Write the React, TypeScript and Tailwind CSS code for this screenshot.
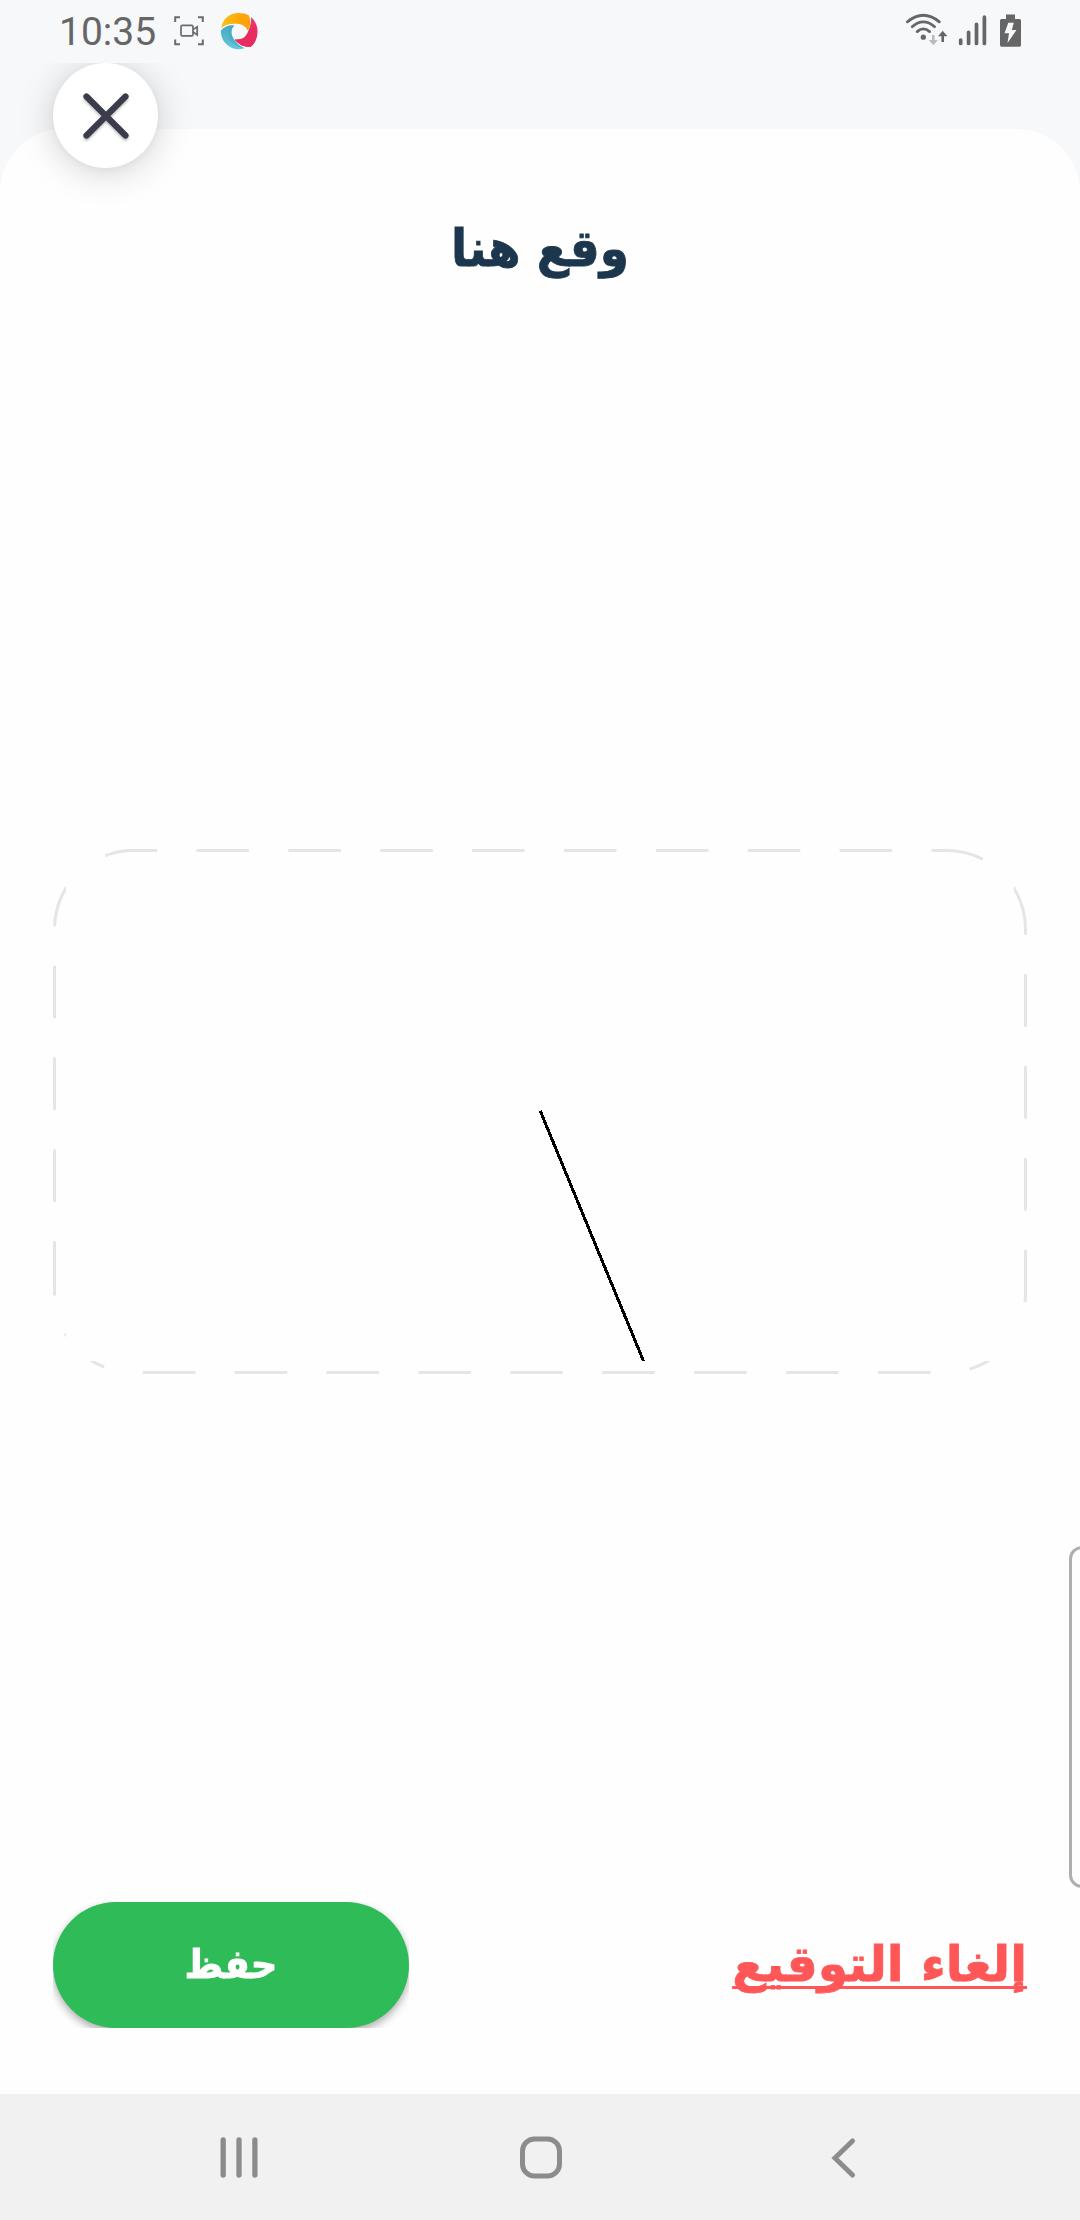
function CaptureIcon() {
  return (
    <svg className="h-[32px] w-[32px]" viewBox="173 14 32 32" fill="none" stroke="#6b6b6b" strokeWidth="2">
      <path d="M175.2 22V17.2H180M198 17.2H202.8V22M202.8 39.5V44.3H198M180 44.3H175.2V39.5" />
      <rect x="181" y="25.4" width="12" height="10.4" rx="1.4" strokeWidth="1.7" />
      <path d="M193 29.6L197.2 26.8V34.8L193 32" strokeWidth="1.7" />
    </svg>
  );
}

function SwirlLogo() {
  return (
    <svg className="h-[38px] w-[38px]" viewBox="0 0 38 38">
      <defs>
        <linearGradient id="sun" x1="0" x2="1">
          <stop offset="0" stopColor="#fdc113" />
          <stop offset="1" stopColor="#fd9b07" />
        </linearGradient>
        <linearGradient id="rose" x1="0" y1="0" x2="0" y2="1">
          <stop offset="0" stopColor="#f4386f" />
          <stop offset="1" stopColor="#dc1f4e" />
        </linearGradient>
        <linearGradient id="sea" x1="0" y1="0" x2="0" y2="1">
          <stop offset="0" stopColor="#42aac2" />
          <stop offset="1" stopColor="#68c5dc" />
        </linearGradient>
      </defs>
      <path d="M1.4 16C2.3 6.5 10 1 18.5 1C22.500 1 26 1.900 28.500 3.200C30.800 7.500 30.500 13 27.800 18.500C26 14.500 22 12 17 11.800C10.500 11.300 5.300 12.500 1.400 16Z" fill="url(#sun)" />
      <path d="M16 6C21 7.500 25.500 11 27.800 18.500C30.500 13 30.800 7.500 28.500 3.200C24 2.800 19 4 16 6Z" fill="#fea30a" />
      <path d="M31 5C35 8.500 37.800 14 37.500 20C37.300 27 34.500 32 30.500 34.800C24 35.300 18.500 32.500 14.800 27.500C20 28.500 25 26 27.200 21.500C30 16 31.500 10.500 31 5Z" fill="url(#rose)" />
      <path d="M36.500 15C33 22 26 28 14.800 27.500C18.500 32.500 24 35.300 30.500 34.800C36 30.500 38 23 36.500 15Z" fill="#e92c60" />
      <path d="M.8 19C3.500 15 8.500 13 14.500 13.300C11 16.500 10.500 21.500 13.200 26C15.800 30.500 19.500 34 24.500 36.300C18.500 38.300 12 37.200 7.300 33C3 29.500 1 24.500 .8 19Z" fill="url(#sea)" />
      <path d="M14.500 13.300C9 17.500 7 23 9.300 27C11.500 31.500 16 34 24.500 36.300C19.500 34 15.800 30.500 13.200 26C10.500 21.500 11 16.500 14.500 13.300Z" fill="#3da5be" opacity=".45" />
    </svg>
  );
}

function WifiIcon() {
  return (
    <svg className="h-[34px] w-[44px]" viewBox="904 12 44 34" fill="none" strokeLinecap="round">
      <g stroke="#666" strokeWidth="2.8">
        <path d="M907.400 21.800Q923.300 8.700 939.300 21.800" />
        <path d="M912.200 26.700Q923.300 17 934.600 26.700" />
        <path d="M917.200 31.600Q923.300 26.200 929.600 31.600" />
      </g>
      <circle cx="923.300" cy="37.200" r="2.600" fill="#666" />
      <path d="M933.300 35V42" stroke="#bbb" strokeWidth="2.600" strokeLinecap="butt" />
      <path d="M928.800 40H937.800L933.300 45.200Z" fill="#bbb" />
      <path d="M942.700 42V34" stroke="#666" strokeWidth="2.600" strokeLinecap="butt" />
      <path d="M938 36.300L942.700 30.800L947.400 36.300Z" fill="#666" />
    </svg>
  );
}

function SignalIcon() {
  return (
    <svg className="h-[32px] w-[30px]" viewBox="958 14 30 32" stroke="#666" strokeWidth="3.700" strokeLinecap="round">
      <path d="M960.700 40V43.500M968.600 32.300V43.500M976.500 24.300V43.500M984.400 17.200V43.500" />
    </svg>
  );
}

function BatteryIcon() {
  return (
    <svg className="h-[34px] w-[22px]" viewBox="1000 14 22 34">
      <path d="M1006 14.500H1015V19H1019.500Q1021 19 1021 20.500V45Q1021 46.700 1019.500 46.700H1001.500Q1000 46.700 1000 45V20.500Q1000 19 1001.500 19H1006Z" fill="#666" />
      <path d="M1008.300 22.700H1013.800L1011.800 30H1016.500L1007.500 43L1009 33.200H1004.500Z" fill="#f7f8fa" />
    </svg>
  );
}

function SignaturePad() {
  return (
    <div className="ml-[53px] h-[525px] w-[974px]">
      <svg className="h-[525px] w-[974px]" viewBox="53 849 974 525" fill="none">
        <path
          d="M54.5 1293.75V929.25A78.75 78.75 0 0 1 133.25 850.5H946.75A78.75 78.75 0 0 1 1025.5 929.25V1293.75A78.75 78.75 0 0 1 946.75 1372.5H133.25A78.75 78.75 0 0 1 54.5 1293.75"
          stroke="#e5e5e5"
          strokeWidth="3"
          strokeDasharray="52.5 39.375"
        />
        <rect x="66" y="862" width="948" height="499" fill="#fefefe" />
        <path d="M540.300 1111L643.500 1361" stroke="#000" strokeWidth="3" shapeRendering="crispEdges" />
      </svg>
    </div>
  );
}

export default function App() {
  return (
    <div className="relative flex h-[2220px] w-[1080px] flex-col overflow-hidden bg-[#f7f8fa]">
      <header className="flex h-[63px] shrink-0 items-start" dir="ltr">
        <span className="ml-[59px] mt-[9px] w-[114px] font-['Roboto'] text-[39px] leading-[46px] text-[#666]">10:35</span>
        <div className="mt-[14px]"><CaptureIcon /></div>
        <div className="ml-[15px] mt-[12px]"><SwirlLogo /></div>
        <div className="ml-auto mr-[58px] mt-[12px] flex items-start">
          <WifiIcon />
          <div className="ml-[10px] mt-[2px]"><SignalIcon /></div>
          <div className="ml-[12px] mt-[2px]"><BatteryIcon /></div>
        </div>
      </header>

      <main className="mt-[66px] flex h-[1965px] shrink-0 flex-col rounded-t-[63px] bg-[#fefefe]">
        <h1 className="mt-[80px] flex h-[80px] items-center justify-center font-['DejaVu_Sans'] text-[47px] font-bold text-[#1c374d] [-webkit-text-stroke:0.8px_#1c374d]" dir="rtl">
          <span className="inline-block scale-y-[1.08]">وقع هنا</span>
        </h1>
        <div className="mt-[560px]"><SignaturePad /></div>
        <div className="mt-[528px] flex h-[126px] items-center justify-between px-[53px]">
          <div className="h-[126px] w-[356px] overflow-hidden">
            <button className="flex h-[126px] w-[356px] items-center justify-center rounded-full bg-[#2fbb57] font-['DejaVu_Sans'] text-[37px] font-bold text-white shadow-[0_4px_9px_rgba(0,0,0,0.32)] [-webkit-text-stroke:0.8px_white]">
              <span className="inline-block scale-y-[1.08]">حفظ</span>
            </button>
          </div>
          <button className="flex h-[80px] items-center font-['DejaVu_Sans'] text-[49px] font-bold text-[#ff5757] [-webkit-text-stroke:0.8px_#ff5757]" dir="rtl">
            <span className="underline decoration-[3px] underline-offset-[5px] [text-decoration-skip-ink:none]">إلغاء التوقيع</span>
          </button>
        </div>
      </main>

      <nav className="flex h-[126px] shrink-0 items-center bg-[#f1f1f1]">
        <svg className="ml-[219px] h-[44px] w-[40px]" viewBox="219 2136 40 44" stroke="#8c8c8c" strokeWidth="5.300" strokeLinecap="round">
          <path d="M223.200 2141V2176M239 2141V2176M254.900 2141V2176" />
        </svg>
        <svg className="ml-[260px] h-[44px] w-[44px]" viewBox="0 0 44 44" fill="none" stroke="#8c8c8c" strokeWidth="5">
          <rect x="3.500" y="4" width="37" height="37" rx="12" />
        </svg>
        <svg className="ml-[267px] h-[44px] w-[28px]" viewBox="830 2135 28 44" fill="none" stroke="#8c8c8c" strokeWidth="5" strokeLinecap="round">
          <path d="M852.500 2141L835 2158L852.500 2175" />
        </svg>
      </nav>

      <div className="absolute left-0 top-[63px] h-[160px] w-[240px] overflow-hidden">
        <button className="ml-[53px] flex h-[105px] w-[105px] items-center justify-center rounded-full bg-white shadow-[0_4px_36px_rgba(0,0,0,0.18),0_2px_8px_rgba(0,0,0,0.04)]">
          <svg className="h-[60px] w-[60px] drop-shadow-[0_2px_1px_rgba(0,0,0,0.25)]" viewBox="0 0 60 60" stroke="#3a3c4b" strokeWidth="6.200" strokeLinecap="round">
            <path d="M10.500 10.500L49.500 49.500M49.500 10.500L10.500 49.500" />
          </svg>
        </button>
      </div>
      <div className="absolute left-[1069px] top-[1546px] h-[342px] w-[30px] rounded-[13px] border-[3px] border-[#afafaf] bg-[#fefefe]" />
    </div>
  );
}
